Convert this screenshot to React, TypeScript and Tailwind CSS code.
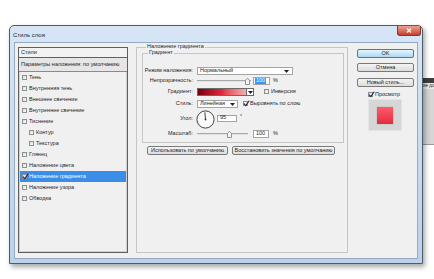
import React from "react";

const FONT = "font-['Liberation_Sans',Arial,sans-serif]";

function Check({ checked = false }: { checked?: boolean }) {
  return (
    <span className="relative inline-block w-[5px] h-[5px] shrink-0 border border-[#8e8f8f] bg-gradient-to-br from-[#d8d8d8] to-[#ffffff]">
      {checked && (
        <svg className="absolute -left-[1px] -top-[2px]" width="7" height="7" viewBox="0 0 7 7">
          <path d="M1 3.6 L2.8 5.6 L6.2 0.8" stroke="#1d2a4a" strokeWidth="1.1" fill="none" />
        </svg>
      )}
    </span>
  );
}

function Arrow() {
  return (
    <svg width="5" height="3" viewBox="0 0 5 3">
      <path d="M0 0 L5 0 L2.5 3 Z" fill="#222" />
    </svg>
  );
}

function Thumb() {
  return (
    <svg width="5" height="7" viewBox="0 0 5 7">
      <path d="M0.5 2.2 L2.5 0.5 L4.5 2.2 L4.5 6.5 L0.5 6.5 Z" fill="#f4f4f4" stroke="#7a7a7a" strokeWidth="0.8" />
    </svg>
  );
}

function Slider({ width, pos }: { width: number; pos: number }) {
  return (
    <div className="relative h-[8px] shrink-0" style={{ width }}>
      <div className="absolute left-0 right-0 top-[3px] h-[2px] border-t border-[#a8a8a8] bg-[#e2e2e2]" />
      <div className="absolute top-[1px]" style={{ left: pos }}>
        <Thumb />
      </div>
    </div>
  );
}

const items: { t: string; sub?: boolean; sel?: boolean; checked?: boolean }[] = [
  { t: "Тень" },
  { t: "Внутренняя тень" },
  { t: "Внешнее свечение" },
  { t: "Внутреннее свечение" },
  { t: "Тиснение" },
  { t: "Контур", sub: true },
  { t: "Текстура", sub: true },
  { t: "Глянец" },
  { t: "Наложение цвета" },
  { t: "Наложение градиента", sel: true, checked: true },
  { t: "Наложение узора" },
  { t: "Обводка" },
];

function Label({ children }: { children: React.ReactNode }) {
  return <div className="w-[51px] shrink-0 text-right pr-[1px] mr-[3px]">{children}</div>;
}

function Btn({ children, primary = false, w }: { children: React.ReactNode; primary?: boolean; w: number }) {
  return (
    <div
      className={
        "h-[9px] flex items-center justify-center rounded-[2px] border shrink-0 " +
        (primary
          ? "border-[#3c7fb1] bg-gradient-to-b from-[#e8f5fc] to-[#a9d9f4]"
          : "border-[#7a7a7a] bg-gradient-to-b from-[#f4f4f4] to-[#dcdcdc]")
      }
      style={{ width: w }}
    >
      {children}
    </div>
  );
}

export default function App() {
  return (
    <div className={"relative w-[434px] h-[279px] overflow-hidden bg-white text-[5.5px] leading-none text-[#1e1e1e] " + FONT}>
      {/* window behind the dialog */}
      <div className="absolute left-[400px] top-[78px] w-[34px] h-[67px] bg-[#dadada] border-b border-[#9a9a9a] flex flex-col">
        <div className="h-[5px] bg-[#3e3e3e]" />
        <div className="h-[6px] bg-[#ececec] flex items-center pl-[23px] text-[4.5px] text-[#222] whitespace-nowrap">ие до</div>
        <div className="flex-1 bg-[#d6d6d6]" />
      </div>

      {/* dialog */}
      <div className="absolute left-[9px] top-[25px] w-[414px] h-[239px] flex flex-col rounded-t-[5px] border border-[#4f5c69] bg-gradient-to-b from-[#d6e6f6] to-[#bad2ec] shadow-[2px_3px_5px_rgba(0,0,0,0.35)]">
        {/* title bar */}
        <div className="h-[16px] flex items-center pl-[3px] shrink-0">
          <span className="text-[6px] text-[#1a1a1a] mt-[2px]">Стиль слоя</span>
          <div className="ml-auto mr-[1px] self-start w-[24px] h-[10px] rounded-b-[3px] border border-t-0 border-[#7b3a33] bg-gradient-to-b from-[#eba293] to-[#c73a2a] flex items-center justify-center">
            <svg width="6" height="5" viewBox="0 0 6 5">
              <path d="M1 0.5 L5 4.5 M5 0.5 L1 4.5" stroke="#fff" strokeWidth="1.2" />
            </svg>
          </div>
        </div>

        {/* body */}
        <div className="flex-1 px-[4px] pb-[4px] flex flex-col">
          <div className="flex-1 border border-[#97abc0] bg-[#f0f0f0] flex pl-[3px] pt-[4px]">
            {/* left styles panel */}
            <div className="w-[110px] h-[206px] shrink-0 border border-[#5f5f5f] flex flex-col">
              <div className="h-[10px] flex items-center pl-[2px] border-b border-[#5f5f5f] bg-[#f2f2f2]">Стили</div>
              <div className="h-[14px] flex items-center pl-[2px] border-b border-[#8a8a8a] bg-[#e6e6e6] whitespace-nowrap">
                Параметры наложения: по умолчанию
              </div>
              <div className="flex-1 flex flex-col border border-t-0 border-[#d0d0d0]">
                {items.map((it) => (
                  <div
                    key={it.t}
                    className={
                      "h-[11px] flex items-center gap-[2px] whitespace-nowrap " +
                      (it.sub ? "pl-[9px] " : "pl-[2px] ") +
                      (it.sel ? "bg-[#3a8ee8] text-white" : "")
                    }
                  >
                    <Check checked={it.checked} />
                    <span>{it.t}</span>
                  </div>
                ))}
              </div>
            </div>

            {/* main frame */}
            <div className="relative ml-[8px] w-[212px] h-[206px] shrink-0 border border-[#c6c6c6] flex flex-col">
              <span className="absolute left-[9px] -top-[4px] px-[1px] bg-[#f0f0f0] whitespace-nowrap">Наложение градиента</span>

              {/* inner group */}
              <div className="relative mt-[5px] ml-[5px] w-[202px] h-[90px] shrink-0 border border-[#c6c6c6] flex flex-col">
                <span className="absolute left-[5px] -top-[4px] px-[1px] bg-[#f0f0f0]">Градиент</span>

                {/* blend mode */}
                <div className="mt-[13px] h-[8px] flex items-center">
                  <Label>Режим наложения:</Label>
                  <div className="w-[96px] h-[8px] border border-[#a4a4a4] bg-white flex items-center pl-[2px] pr-[3px]">
                    <span>Нормальный</span>
                    <span className="ml-auto">
                      <Arrow />
                    </span>
                  </div>
                </div>

                {/* opacity */}
                <div className="mt-[2px] h-[8px] flex items-center">
                  <Label>Непрозрачность:</Label>
                  <Slider width={54} pos={48} />
                  <div className="ml-[2px] w-[17px] h-[8px] border border-[#a4a4a4] bg-white flex items-center pl-[1px]">
                    <span className="bg-[#3399ff] text-white px-[1px]">100</span>
                  </div>
                  <span className="ml-[3px]">%</span>
                </div>

                {/* gradient */}
                <div className="mt-[3px] h-[8px] flex items-center">
                  <Label>Градиент:</Label>
                  <div className="w-[57px] h-[8px] border border-[#6a6a6a] flex">
                    <div className="flex-1 bg-gradient-to-r from-[#7a0010] via-[#e0283f] to-[#f6aab2]" />
                    <div className="w-[7px] bg-white border-l border-[#6a6a6a] flex items-center justify-center">
                      <Arrow />
                    </div>
                  </div>
                  <span className="ml-[10px]">
                    <Check />
                  </span>
                  <span className="ml-[2px]">Инверсия</span>
                </div>

                {/* style */}
                <div className="mt-[4px] h-[8px] flex items-center">
                  <Label>Стиль:</Label>
                  <div className="w-[41px] h-[8px] border border-[#a4a4a4] bg-white flex items-center pl-[2px] pr-[2px]">
                    <span>Линейная</span>
                    <span className="ml-auto">
                      <Arrow />
                    </span>
                  </div>
                  <span className="ml-[5px]">
                    <Check checked />
                  </span>
                  <span className="ml-[2px] whitespace-nowrap">Выровнять по слою</span>
                </div>

                {/* angle */}
                <div className="mt-[2px] h-[18px] flex items-center">
                  <Label>Угол:</Label>
                  <svg className="-ml-[1px] shrink-0" width="19" height="19" viewBox="0 0 19 19">
                    <circle cx="9.5" cy="9.5" r="8.6" fill="#fafafa" stroke="#2c2c2c" strokeWidth="0.9" />
                    <line x1="9.5" y1="9.5" x2="8.9" y2="2.3" stroke="#2c2c2c" strokeWidth="0.9" />
                    <circle cx="9.5" cy="9.5" r="0.9" fill="#2c2c2c" />
                  </svg>
                  <div className="ml-[2px] w-[20px] h-[7px] border border-[#a4a4a4] bg-white flex items-center pl-[2px] -mt-[2px]">
                    95
                  </div>
                  <span className="ml-[3px] -mt-[5px]">°</span>
                </div>

                {/* scale */}
                <div className="mt-[2px] h-[8px] flex items-center">
                  <Label>Масштаб:</Label>
                  <Slider width={51} pos={30} />
                  <div className="ml-[5px] w-[16px] h-[8px] border border-[#a4a4a4] bg-white flex items-center pl-[2px]">100</div>
                  <span className="ml-[4px]">%</span>
                </div>
              </div>

              {/* default buttons */}
              <div className="mt-[3px] ml-[10px] flex gap-[4px]">
                <Btn w={81}>Использовать по умолчанию</Btn>
                <Btn w={103}>Восстановить значения по умолчанию</Btn>
              </div>
            </div>

            {/* right column */}
            <div className="ml-[9px] mt-[2px] w-[57px] shrink-0 flex flex-col">
              <Btn w={57} primary>OK</Btn>
              <div className="mt-[5px]">
                <Btn w={57}>Отмена</Btn>
              </div>
              <div className="mt-[6px]">
                <Btn w={57}>Новый стиль...</Btn>
              </div>
              <div className="mt-[4px] h-[7px] flex items-center pl-[11px] gap-[2px]">
                <Check checked />
                <span>Просмотр</span>
              </div>
              <div className="mt-[1px] ml-[11px] w-[34px] h-[32px] bg-[#d6d6d6] border border-[#e4e4e4] flex items-center justify-center">
                <div className="w-[16px] h-[17px] bg-gradient-to-b from-[#ff5a6a] to-[#e22a40] shadow-[0_0_1px_rgba(0,0,0,0.3)]" />
              </div>
            </div>
          </div>
        </div>
      </div>
    </div>
  );
}
